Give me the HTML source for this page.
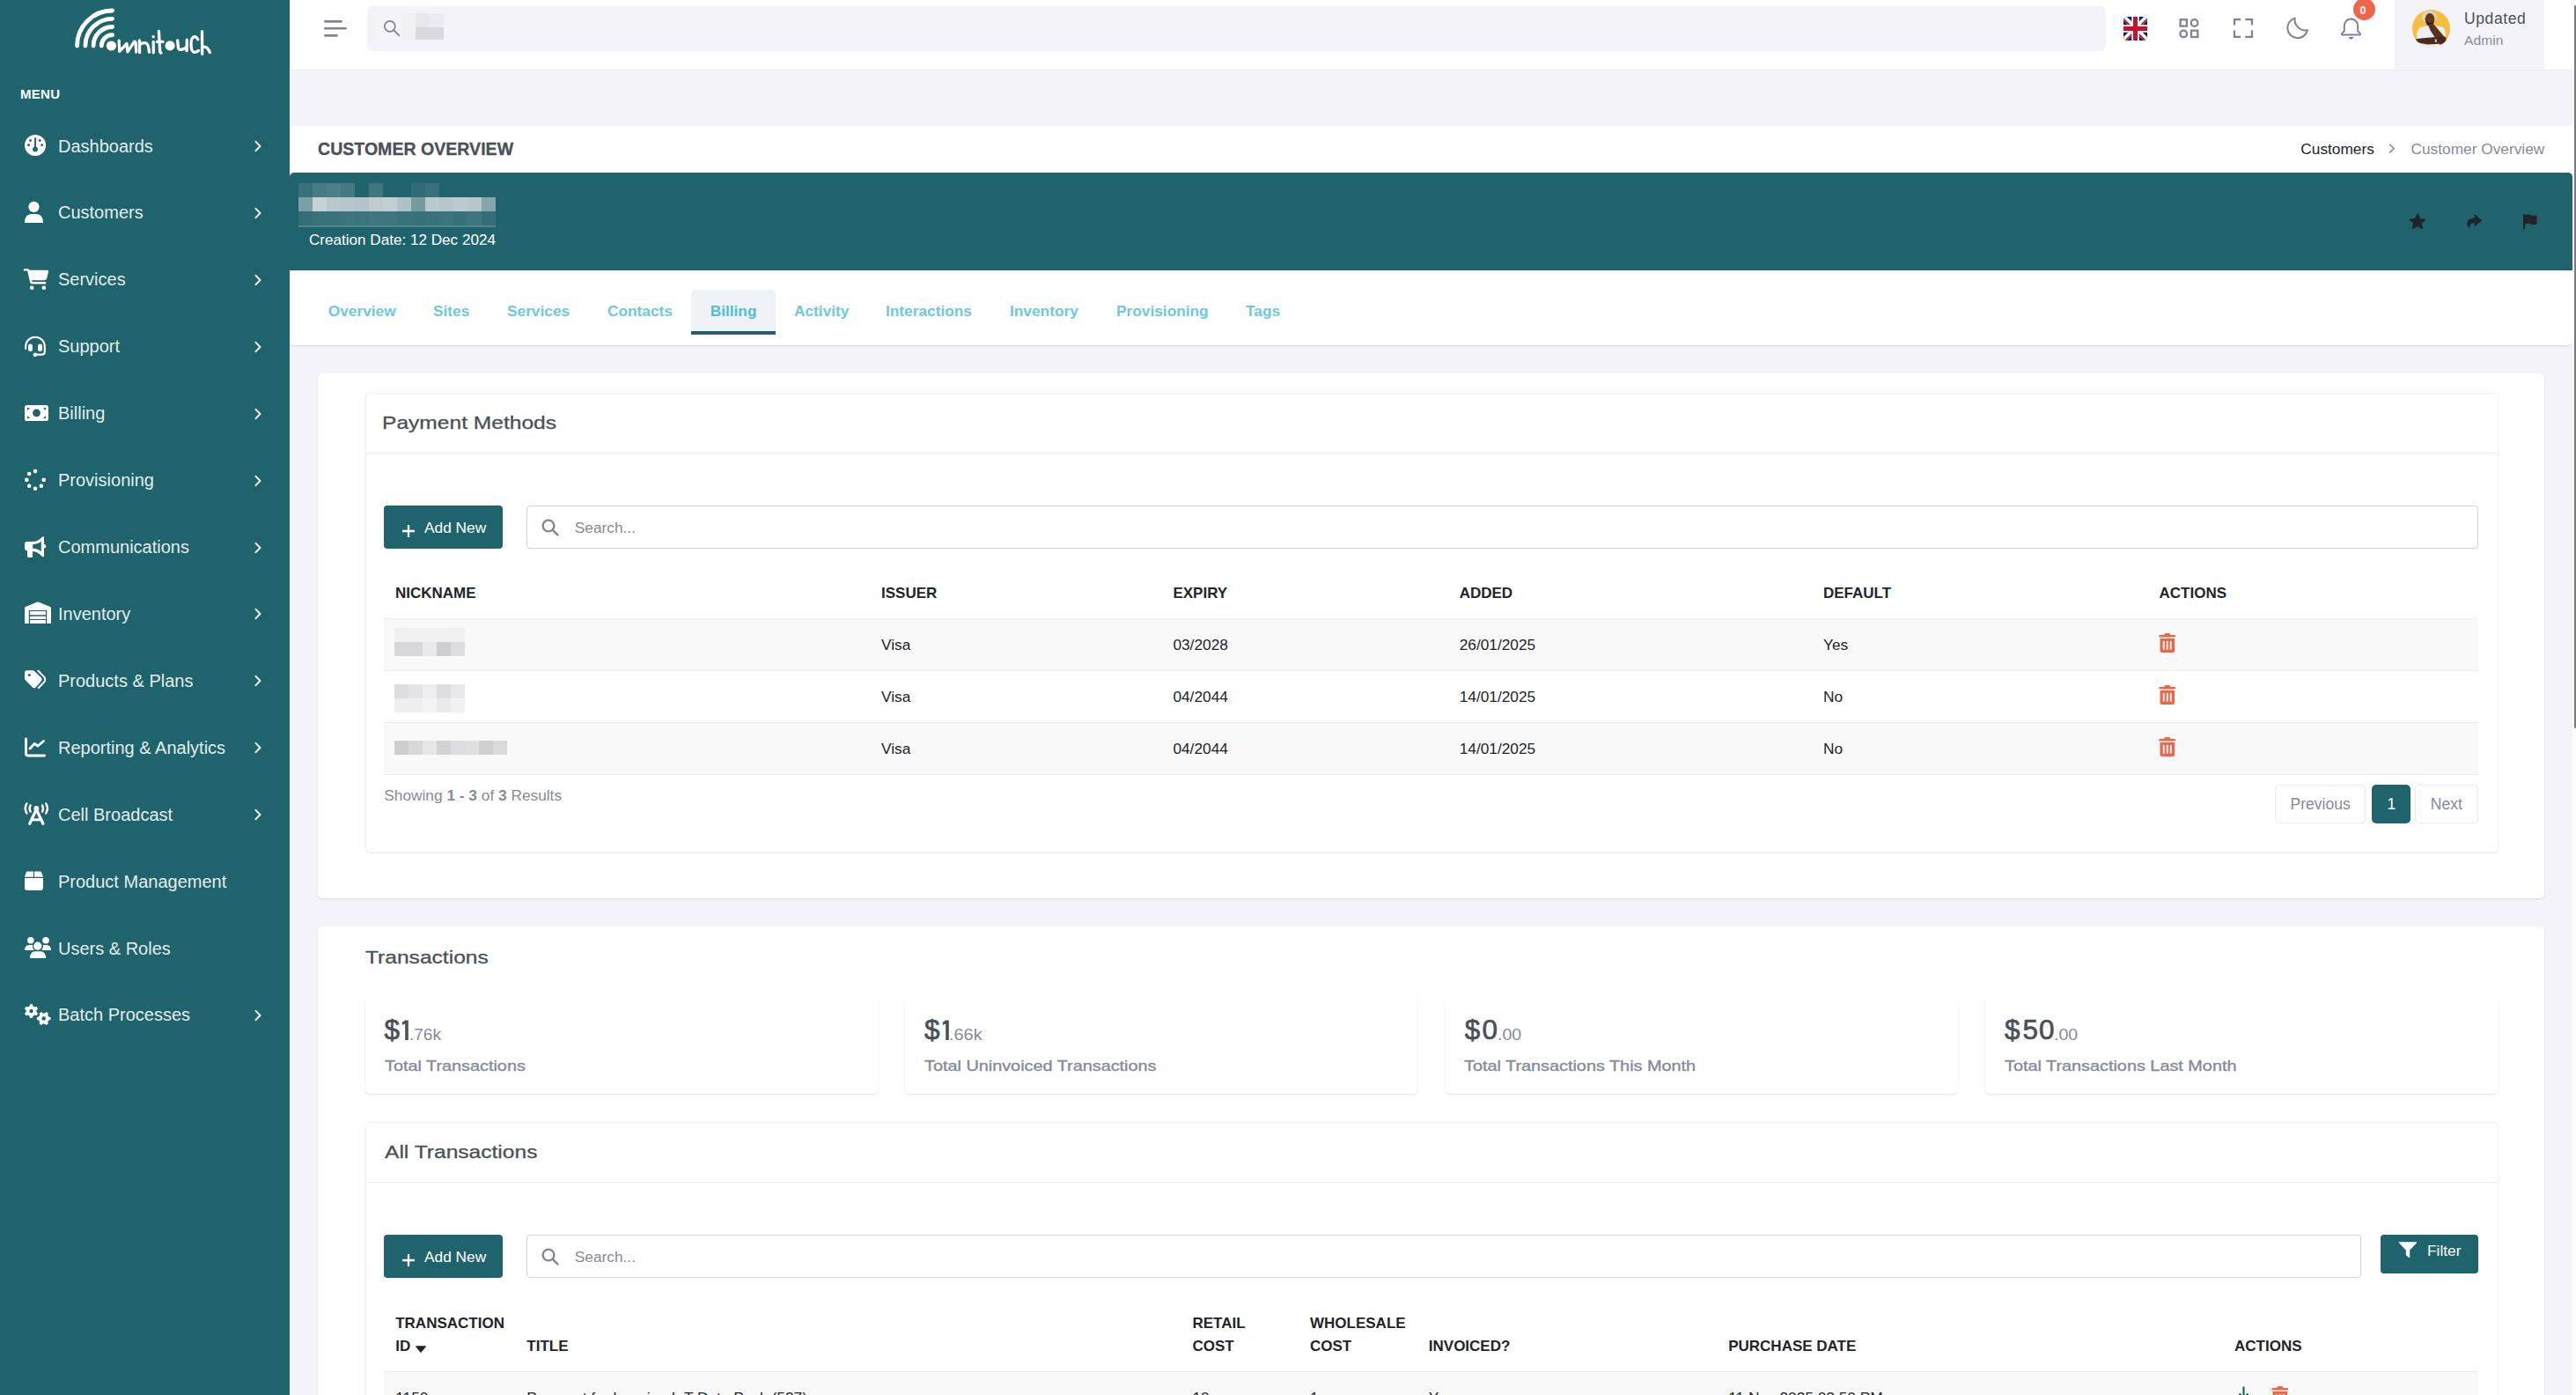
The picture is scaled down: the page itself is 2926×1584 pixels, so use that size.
<!DOCTYPE html>
<html>
<head>
<meta charset="utf-8">
<style>
*{box-sizing:border-box;margin:0;padding:0}
html,body{width:2926px;height:1584px;overflow:hidden}
body{position:relative;background:#f3f3f9;font-family:"Liberation Sans",sans-serif;color:#212529}
.abs{position:absolute}
.t{position:absolute;white-space:nowrap;line-height:1}
/* sidebar */
#sb{position:absolute;left:0;top:0;width:329px;height:1584px;background:#1f646c}
.mi{position:absolute;left:0;width:329px;height:40px}
.mi svg.ic{position:absolute;left:22px;top:0;width:40px;height:40px}
.mi .lb{position:absolute;left:66px;top:10.5px;font-size:20px;line-height:20px;color:rgba(255,255,255,0.9);white-space:nowrap}
.mi svg.ch{position:absolute;left:286px;top:14px;width:14px;height:14px}
/* header */
#hd{position:absolute;left:329px;top:0;width:2593px;height:80px;background:#fff;border-bottom:1px solid #e9ebec}
#scr{position:absolute;left:2922px;top:0;width:4px;height:1584px;background:#fbfbfb}
#scr i{position:absolute;left:2px;top:6px;width:2px;height:821px;background:#7a7a7a;border-radius:1px}

/* header contents */
.hic{position:absolute;top:0}
/* title */
#ttl{position:absolute;left:329px;top:143px;width:2593px;height:53px;background:#fff}
#ban{position:absolute;left:329px;top:196px;width:2593px;height:111px;background:#1f646c;border-radius:5px 5px 0 0}
#tabs{position:absolute;left:329px;top:307px;width:2593px;height:85px;background:#fff;border-radius:0 0 5px 5px;box-shadow:0 1px 2px rgba(56,65,74,0.15)}
.tab{position:absolute;top:38px;font-size:17.3px;line-height:17px;font-weight:700;color:#6ec9dc;white-space:nowrap}
.card{position:absolute;background:#fff;border-radius:5px;box-shadow:0 1px 2px rgba(56,65,74,0.15)}
.icard{position:absolute;background:#fff;border-radius:5px;border:1px solid #f2f2f4;box-shadow:0 1px 2px rgba(56,65,74,0.08)}
.h4{position:absolute;font-size:21px;line-height:21px;color:#495057;white-space:nowrap;transform-origin:0 0;transform:scaleX(1.17);-webkit-text-stroke:0.3px #495057}
.btn{position:absolute;background:#1f646c;border-radius:4px;color:#fff}
.inp{position:absolute;background:#fff;border:1px solid #ced4da;border-radius:4px}
.th{position:absolute;font-size:17px;line-height:17px;font-weight:700;color:#212529;white-space:nowrap}
.td{position:absolute;font-size:17.3px;line-height:17px;color:#212529;white-space:nowrap}
.row{position:absolute;border-bottom:1px solid #e9ebec}
</style>
</head>
<body>

<!-- SIDEBAR -->
<div id="sb">
  <svg class="abs" style="left:75px;top:0" width="180" height="70" viewBox="0 0 180 70" fill="none" stroke="#fff" stroke-linecap="round" stroke-linejoin="round">
    <path d="M12.6,52 A40,40 0 0 1 52.6,12" stroke-width="4.8"/>
    <path d="M21.9,52 A30.7,30.7 0 0 1 52.6,21.3" stroke-width="4.8"/>
    <path d="M31.1,52 A21.5,21.5 0 0 1 52.6,30.5" stroke-width="4.8"/>
    <path d="M40.3,52 A12.3,12.3 0 0 1 52.6,39.7" stroke-width="4.8"/>
    <g stroke-width="3.3">
      <path d="M60.2,46.2 L60.7,58.3 L69,49.5 L70,58.8 L77.2,47.6 Q78.5,46.5 79,48.5 L79.8,59"/>
      <path d="M83.4,46 L83.6,59.5 M83.5,51 Q87,47.5 91.1,49 Q93.5,50 94.5,59.2"/>
      <path d="M99.2,47.4 L99.3,59.8"/>
      <path d="M105.4,35.3 L106.7,58.6 Q107,60 108,60.1 M103.4,47.4 L110.1,47.4"/>
      <path d="M126.7,46 L127.5,54.5 Q128.5,56.8 131,56.4 Q135,55.5 136.3,53.9 M137.3,45.2 L137.1,57.7"/>
      <path d="M149.8,44.7 Q148,41.5 145.8,41.7 Q142,42.5 142,50.4 Q142.2,59.3 145.8,59.3 Q149,59.3 150.7,57.4"/>
      <path d="M154.5,35.7 L154.7,61.25 M154.6,54 Q156.5,52.5 159.3,53.8 Q161.5,55 163.4,59.6"/>
    </g>
    <circle cx="99.2" cy="41.8" r="1.7" fill="#fff" stroke="none"/>
    <circle cx="51.4" cy="52" r="5.6" fill="#fff" stroke="none"/>
    <circle cx="118.1" cy="51.9" r="5.6" fill="#fff" stroke="none"/>
  </svg>
  <div class="t" style="left:23px;top:98.5px;font-size:15px;font-weight:700;color:#fff;letter-spacing:0.3px">MENU</div>
  <!-- menu items inserted below -->
  <div class="mi" style="top:145.00px"><svg class="ic" viewBox="0 0 40 40"><circle cx="18.06" cy="20.07" r="12.04" fill="#fff"/><rect x="17.1" y="11" width="1.9" height="13" rx="0.9" fill="#1f646c"/><circle cx="18" cy="24.4" r="2.9" fill="#1f646c"/><circle cx="12.6" cy="14.6" r="1.45" fill="#1f646c"/><circle cx="23.3" cy="14.6" r="1.45" fill="#1f646c"/><circle cx="10.5" cy="19.8" r="1.45" fill="#1f646c"/><circle cx="25.6" cy="19.8" r="1.45" fill="#1f646c"/></svg><div class="lb">Dashboards</div><svg class="ch" viewBox="0 0 14 14"><path d="M4.5,1.8 L9.5,7 L4.5,12.2" fill="none" stroke="#fff" stroke-width="1.9" stroke-linecap="round" stroke-linejoin="round"/></svg></div>
  <div class="mi" style="top:220.92px"><svg class="ic" viewBox="0 0 40 40"><circle cx="16.5" cy="13.9" r="6.1" fill="#fff"/><path d="M6,32 Q6,22 14,22 L19,22 Q27,22 27,32 Z" fill="#fff"/></svg><div class="lb">Customers</div><svg class="ch" viewBox="0 0 14 14"><path d="M4.5,1.8 L9.5,7 L4.5,12.2" fill="none" stroke="#fff" stroke-width="1.9" stroke-linecap="round" stroke-linejoin="round"/></svg></div>
  <div class="mi" style="top:296.84px"><svg class="ic" viewBox="0 0 40 40"><path d="M5.9,8.2 H9.6 Q10.9,8.2 11.3,9.5 L11.4,9.8 H32.2 Q33.4,9.9 33.1,11.3 L31.2,19 Q30.8,21 28.8,21.2 H14.2 L14.7,23 H30.2 V25.6 H14.4 Q12.6,25.5 12.2,23.8 L9.1,10.6 H5.9 A1.2,1.2 0 0 1 5.9,8.2 Z" fill="#fff"/><circle cx="14.2" cy="29.7" r="2.3" fill="#fff"/><circle cx="27.8" cy="29.7" r="2.3" fill="#fff"/></svg><div class="lb">Services</div><svg class="ch" viewBox="0 0 14 14"><path d="M4.5,1.8 L9.5,7 L4.5,12.2" fill="none" stroke="#fff" stroke-width="1.9" stroke-linecap="round" stroke-linejoin="round"/></svg></div>
  <div class="mi" style="top:372.76px"><svg class="ic" viewBox="0 0 40 40"><path d="M7.2,23 V20.5 A10.8,10.8 0 0 1 28.8,20.5 V26.5 Q28.8,29.6 25.8,29.6 H18" fill="none" stroke="#fff" stroke-width="2.1" stroke-linecap="round"/><rect x="10" y="17.6" width="5" height="8.5" rx="2.4" fill="#fff"/><rect x="21" y="17.6" width="5" height="8.5" rx="2.4" fill="#fff"/><ellipse cx="18" cy="29.7" rx="2.5" ry="2.2" fill="#fff"/></svg><div class="lb">Support</div><svg class="ch" viewBox="0 0 14 14"><path d="M4.5,1.8 L9.5,7 L4.5,12.2" fill="none" stroke="#fff" stroke-width="1.9" stroke-linecap="round" stroke-linejoin="round"/></svg></div>
  <div class="mi" style="top:448.68px"><svg class="ic" viewBox="0 0 40 40"><rect x="6" y="10.9" width="27" height="18.1" rx="2.6" fill="#fff"/><circle cx="19.5" cy="19.8" r="4.4" fill="#1f646c"/><path d="M9,14 H12 L9,17 Z M30,14 H27 L30,17 Z M9,23 L12,26 H9 Z M30,23 L27,26 H30 Z" fill="#1f646c"/></svg><div class="lb">Billing</div><svg class="ch" viewBox="0 0 14 14"><path d="M4.5,1.8 L9.5,7 L4.5,12.2" fill="none" stroke="#fff" stroke-width="1.9" stroke-linecap="round" stroke-linejoin="round"/></svg></div>
  <div class="mi" style="top:524.60px"><svg class="ic" viewBox="0 0 40 40"><g fill="#fff"><circle cx="18" cy="10.1" r="2.3"/><circle cx="11.2" cy="13" r="2.3"/><circle cx="8.3" cy="19.9" r="2.3"/><circle cx="11.2" cy="26.8" r="2.3"/><circle cx="18" cy="29.8" r="2.3"/><circle cx="24.8" cy="26.8" r="2.3"/><circle cx="27.7" cy="19.9" r="2.3"/></g></svg><div class="lb">Provisioning</div><svg class="ch" viewBox="0 0 14 14"><path d="M4.5,1.8 L9.5,7 L4.5,12.2" fill="none" stroke="#fff" stroke-width="1.9" stroke-linecap="round" stroke-linejoin="round"/></svg></div>
  <div class="mi" style="top:600.52px"><svg class="ic" viewBox="0 0 40 40"><path d="M8.8,14 H15 Q21,14 26,8.8 Q27,8 28,8.5 V31 Q27,31.8 26,31 Q21,25.5 15,25 V30.5 Q15,32 13.5,32 H10.5 Q9,32 9,30.5 V24.5 Q6,24 6,21 V17 Q6,14 8.8,14 Z" fill="#fff"/><path d="M15.2,17.2 Q21,17 24.8,13.8 V25.2 Q21,22 15.2,21.8 Z" fill="#1f646c"/><ellipse cx="28.6" cy="19.3" rx="1.5" ry="2.2" fill="#fff"/></svg><div class="lb">Communications</div><svg class="ch" viewBox="0 0 14 14"><path d="M4.5,1.8 L9.5,7 L4.5,12.2" fill="none" stroke="#fff" stroke-width="1.9" stroke-linecap="round" stroke-linejoin="round"/></svg></div>
  <div class="mi" style="top:676.44px"><svg class="ic" viewBox="0 0 40 40"><path d="M6,14.2 Q6,13.6 7,13.1 L20.5,7.6 Q21,7.4 21.5,7.6 L35,13.1 Q36,13.6 36,14.2 V32 H6 Z" fill="#fff"/><rect x="10.8" y="17" width="20.4" height="15.5" fill="#1f646c"/><rect x="12" y="18" width="18" height="4.2" rx="0.6" fill="#fff"/><rect x="12" y="23.8" width="18" height="3.2" rx="0.6" fill="#fff"/><rect x="12" y="28.1" width="18" height="3.9" rx="0.6" fill="#fff"/></svg><div class="lb">Inventory</div><svg class="ch" viewBox="0 0 14 14"><path d="M4.5,1.8 L9.5,7 L4.5,12.2" fill="none" stroke="#fff" stroke-width="1.9" stroke-linecap="round" stroke-linejoin="round"/></svg></div>
  <div class="mi" style="top:752.36px"><svg class="ic" viewBox="0 0 40 40"><path d="M6,11.5 Q6,9.2 8.2,9.2 H15.3 Q16.2,9.2 17,10 L24.8,17.6 Q26.4,19.6 24.8,21.4 L18.6,28.4 Q16.8,30.2 15,28.6 L7,20.4 Q6,19.4 6,18.2 Z" fill="#fff"/><circle cx="11.3" cy="14.4" r="1.5" fill="#1f646c"/><path d="M21.3,9.8 L28.2,16.6 Q30.2,19.4 28.2,22.4 L21.8,29" fill="none" stroke="#fff" stroke-width="2" stroke-linecap="round"/></svg><div class="lb">Products &amp; Plans</div><svg class="ch" viewBox="0 0 14 14"><path d="M4.5,1.8 L9.5,7 L4.5,12.2" fill="none" stroke="#fff" stroke-width="1.9" stroke-linecap="round" stroke-linejoin="round"/></svg></div>
  <div class="mi" style="top:828.28px"><svg class="ic" viewBox="0 0 40 40"><path d="M7.5,11 V27.6 Q7.5,30 9.9,30 H28.5" fill="none" stroke="#fff" stroke-width="2.9" stroke-linecap="round"/><path d="M12,22 L17.3,16.3 L21,19 L27.5,13.5" fill="none" stroke="#fff" stroke-width="2.9" stroke-linecap="round" stroke-linejoin="round"/></svg><div class="lb">Reporting &amp; Analytics</div><svg class="ch" viewBox="0 0 14 14"><path d="M4.5,1.8 L9.5,7 L4.5,12.2" fill="none" stroke="#fff" stroke-width="1.9" stroke-linecap="round" stroke-linejoin="round"/></svg></div>
  <div class="mi" style="top:904.20px"><svg class="ic" viewBox="0 0 40 40"><circle cx="19.3" cy="13.9" r="2.9" fill="#fff"/><path d="M19.3,15 L11.7,31.3 M19.3,15 L26.9,31.3" stroke="#fff" stroke-width="3.2" stroke-linecap="round"/><path d="M14,26.8 H24.6" stroke="#fff" stroke-width="3"/><path d="M8.4,8.4 Q5,14 8.4,19.4 M12.6,10.4 Q10.6,14 12.6,17.6 M30.2,8.4 Q33.6,14 30.2,19.4 M26,10.4 Q28,14 26,17.6" fill="none" stroke="#fff" stroke-width="2.4" stroke-linecap="round"/></svg><div class="lb">Cell Broadcast</div><svg class="ch" viewBox="0 0 14 14"><path d="M4.5,1.8 L9.5,7 L4.5,12.2" fill="none" stroke="#fff" stroke-width="1.9" stroke-linecap="round" stroke-linejoin="round"/></svg></div>
  <div class="mi" style="top:980.12px"><svg class="ic" viewBox="0 0 40 40"><path d="M9,9.6 H15.9 V15.8 H6 L7.6,10.8 Q8,9.6 9,9.6 Z M17,9.6 H23.8 Q24.8,9.6 25.2,10.8 L27,15.8 H17 Z M6,16.9 H27 V28 Q27,31 24,31 H9 Q6,31 6,28 Z" fill="#fff"/></svg><div class="lb">Product Management</div></div>
  <div class="mi" style="top:1056.04px"><svg class="ic" viewBox="0 0 40 40"><circle cx="12.8" cy="11.8" r="3.8" fill="#fff"/><circle cx="30" cy="11.8" r="3.8" fill="#fff"/><path d="M6,23 Q6,17 11.5,17 H15 Q14.6,20.5 16.6,23 Z M36,23 Q36,17 30.5,17 H27 Q27.4,20.5 25.4,23 Z" fill="#fff"/><circle cx="20.8" cy="18.2" r="4.6" fill="#fff"/><path d="M12,32 Q12,24.2 18,24.2 H24 Q30,24.2 30,32 Z" fill="#fff"/></svg><div class="lb">Users &amp; Roles</div></div>
  <div class="mi" style="top:1131.96px"><svg class="ic" viewBox="0 0 40 40"><path d="M11.57,10.42 L12.04,8.23 L14.96,8.23 L15.43,10.42 L17.46,11.59 L19.58,10.90 L21.04,13.43 L19.38,14.93 L19.38,17.27 L21.04,18.77 L19.58,21.30 L17.46,20.61 L15.43,21.78 L14.96,23.97 L12.04,23.97 L11.57,21.78 L9.54,20.61 L7.42,21.30 L5.96,18.77 L7.62,17.27 L7.62,14.93 L5.96,13.43 L7.42,10.90 L9.54,11.59 Z" fill="#fff"/><circle cx="13.5" cy="16.1" r="2.2" fill="#1f646c"/><path d="M33.38,22.57 L35.57,23.04 L35.57,25.96 L33.38,26.43 L32.21,28.46 L32.90,30.58 L30.37,32.04 L28.87,30.38 L26.53,30.38 L25.03,32.04 L22.50,30.58 L23.19,28.46 L22.02,26.43 L19.83,25.96 L19.83,23.04 L22.02,22.57 L23.19,20.54 L22.50,18.42 L25.03,16.96 L26.53,18.62 L28.87,18.62 L30.37,16.96 L32.90,18.42 L32.21,20.54 Z" fill="#fff"/><circle cx="27.7" cy="24.5" r="2.2" fill="#1f646c"/></svg><div class="lb">Batch Processes</div><svg class="ch" viewBox="0 0 14 14"><path d="M4.5,1.8 L9.5,7 L4.5,12.2" fill="none" stroke="#fff" stroke-width="1.9" stroke-linecap="round" stroke-linejoin="round"/></svg></div>
</div>

<!-- HEADER -->
<div id="hd"></div>

<!-- HEADER CONTENTS -->
<svg class="abs" style="left:366px;top:21px" width="30" height="23" viewBox="0 0 30 23"><g stroke="#7f8394" stroke-width="2.6" stroke-linecap="round"><path d="M3.4,3.4 H21.5"/><path d="M3.4,11.3 H26.6"/><path d="M3.4,19.4 H16.4"/></g></svg>
<div class="abs" style="left:417px;top:7px;width:1975px;height:51px;background:#f3f3f9;border-radius:6px"></div>
<svg class="abs" style="left:434px;top:21px" width="22" height="22" viewBox="0 0 22 22"><circle cx="8.8" cy="8.8" r="6" fill="none" stroke="#7f8394" stroke-width="1.7"/><path d="M13.2,13.2 L19.3,19.3" stroke="#7f8394" stroke-width="1.9" stroke-linecap="round"/></svg>
<div class="abs" style="left:456px;top:15px;width:16px;height:30px;background:#efeff4"></div><div class="abs" style="left:472px;top:15px;width:16px;height:16px;background:#e7e7ed"></div><div class="abs" style="left:488px;top:15px;width:16px;height:16px;background:#eaeaf0"></div>
<div class="abs" style="left:472px;top:31px;width:32px;height:14px;background:#d9d9df"></div>
<!-- UK flag -->
<svg class="abs" style="left:2412px;top:19px" width="27" height="27" viewBox="0 0 27 27"><defs><clipPath id="fc"><rect x="0" y="0" width="27" height="27" rx="4.5"/></clipPath></defs><g clip-path="url(#fc)"><rect width="27" height="27" fill="#012169"/><path d="M0,0 L27,27 M27,0 L0,27" stroke="#fff" stroke-width="5.5"/><path d="M0,0 L13.5,13.5 M27,27 L13.5,13.5" stroke="#C8102E" stroke-width="1.8" transform="translate(-1.2,1.2)"/><path d="M27,0 L13.5,13.5 M0,27 L13.5,13.5" stroke="#C8102E" stroke-width="1.8" transform="translate(1.2,1.2)"/><path d="M13.5,0 V27 M0,13.5 H27" stroke="#fff" stroke-width="8.5"/><path d="M13.5,0 V27 M0,13.5 H27" stroke="#C8102E" stroke-width="5"/></g></svg>
<!-- grid -->
<svg class="abs" style="left:2474px;top:20px" width="25" height="25" viewBox="0 0 25 25"><g fill="none" stroke="#7f8394" stroke-width="2.3"><rect x="2.6" y="2.3" width="7.3" height="7.3"/><circle cx="18.6" cy="6" r="3.8"/><circle cx="6.2" cy="18.4" r="3.8"/><rect x="15" y="14.7" width="7.3" height="7.3"/></g></svg>
<!-- fullscreen -->
<svg class="abs" style="left:2536px;top:20px" width="25" height="25" viewBox="0 0 25 25"><g fill="none" stroke="#7f8394" stroke-width="2.3"><path d="M2,8.6 V2.2 H9"/><path d="M14.3,2.2 H22 V8.6"/><path d="M22,14.5 V21.8 H14.3"/><path d="M9,21.8 H2 V14.5"/></g></svg>
<!-- moon -->
<svg class="abs" style="left:2590px;top:14px" width="36" height="34" viewBox="0 0 36 34"><path d="M16.7,6.6 A11.5,11.5 0 1 0 31,20.2 A12,12 0 0 1 16.7,6.6 Z" fill="none" stroke="#7f8394" stroke-width="2" stroke-linejoin="round"/></svg>
<!-- bell -->
<svg class="abs" style="left:2657px;top:18px" width="28" height="29" viewBox="0 0 28 29"><path d="M13.5,3.5 Q6,4 5.8,12 V17.2 L3.4,19.6 Q2.8,20.4 3.2,21.2 Q3.6,21.6 4.4,21.6 H22.6 Q23.4,21.6 23.8,21.2 Q24.2,20.4 23.6,19.6 L21.2,17.2 V12 Q21,4 13.5,3.5 Z" fill="none" stroke="#7f8394" stroke-width="2" stroke-linejoin="round"/><path d="M12,3.6 L13.5,2.2 L15,3.6 Z" fill="#7f8394"/><path d="M10.5,24 H16.5 Q15.5,26.7 13.5,26.7 Q11.5,26.7 10.5,24 Z" fill="#7f8394"/></svg>
<div class="abs" style="left:2672.5px;top:-2.5px;width:25px;height:25px;border-radius:50%;background:#f06548"></div>
<div class="t" style="left:2680.5px;top:5.5px;font-size:12.5px;font-weight:700;color:#fff">0</div>
<!-- profile -->
<div class="abs" style="left:2720px;top:0;width:170px;height:79px;background:#f3f3f9"></div>
<svg class="abs" style="left:2740px;top:11px" width="43" height="43" viewBox="0 0 43 43"><defs><clipPath id="av"><circle cx="21.5" cy="21.5" r="21.5"/></clipPath></defs><g clip-path="url(#av)"><rect width="43" height="43" fill="#f7bd3c"/><path d="M5,43 L5,32 Q5.2,23 8,21 Q11,19.3 17.4,18.1 L25.6,17.7 Q33,19 35.3,20.4 Q38,23 38,30 L38,43 Z" fill="#ededf2"/><ellipse cx="19.4" cy="8.4" rx="8.4" ry="7.5" fill="#e4d3b5"/><ellipse cx="20" cy="10.7" rx="5.4" ry="6.8" fill="#65391f"/><path d="M15.2,12.5 Q16,18.5 20,18.6 Q24,18.4 25,12.5 Q22.5,15 20,15 Q17.5,15 15.2,12.5 Z" fill="#2e1a0f"/><path d="M18.3,17.6 Q21,15.6 24.6,16.8 L38.5,33 L37.5,40 L31,39.5 L20.5,23.5 Z" fill="#5a3320"/><path d="M3.5,33.6 Q15,31.2 38,30.8 L38.5,37 Q28,39.5 17,39.6 Q9,38.8 3.5,35.8 Z" fill="#4b2a1a"/><rect x="25.8" y="33.6" width="2" height="3.4" fill="#c9c9cc"/></g></svg>
<div class="t" style="left:2799px;top:13px;font-size:17.5px;color:#495057;letter-spacing:0.6px">Updated</div>
<div class="t" style="left:2799px;top:38px;font-size:15.5px;color:#878a99;letter-spacing:0.1px">Admin</div>

<!-- TITLE BAR -->
<div id="ttl"></div>
<div class="t" style="left:360.6px;top:159.3px;font-size:20.25px;font-weight:700;color:#495057;transform-origin:0 0;transform:scaleX(0.966);-webkit-text-stroke:0.3px #495057">CUSTOMER OVERVIEW</div>
<div class="t" style="left:2613.3px;top:160.8px;font-size:17.3px;color:#212529">Customers</div>
<svg class="abs" style="left:2711px;top:162px" width="12" height="13" viewBox="0 0 12 13"><path d="M3.6,2.3 L8.2,6.6 L3.6,10.9" fill="none" stroke="#878a99" stroke-width="1.5" stroke-linecap="round"/></svg>
<div class="t" style="left:2738.5px;top:160.8px;font-size:17.3px;color:#878a99">Customer Overview</div>

<!-- BANNER -->
<div id="ban"></div>
<div class="abs" style="left:339px;top:208px;width:16px;height:16px;background:rgb(56,113,122)"></div>
<div class="abs" style="left:355px;top:208px;width:16px;height:16px;background:rgb(72,124,132)"></div>
<div class="abs" style="left:371px;top:208px;width:16px;height:16px;background:rgb(76,127,135)"></div>
<div class="abs" style="left:387px;top:208px;width:16px;height:16px;background:rgb(68,121,130)"></div>
<div class="abs" style="left:419px;top:208px;width:16px;height:16px;background:rgb(64,119,127)"></div>
<div class="abs" style="left:467px;top:208px;width:16px;height:16px;background:rgb(48,108,117)"></div>
<div class="abs" style="left:483px;top:208px;width:16px;height:16px;background:rgb(56,113,122)"></div>
<div class="abs" style="left:339px;top:224px;width:16px;height:16px;background:rgb(123,159,164)"></div>
<div class="abs" style="left:355px;top:224px;width:16px;height:16px;background:rgb(198,210,211)"></div>
<div class="abs" style="left:371px;top:224px;width:16px;height:16px;background:rgb(184,200,203)"></div>
<div class="abs" style="left:387px;top:224px;width:16px;height:16px;background:rgb(182,199,201)"></div>
<div class="abs" style="left:403px;top:224px;width:16px;height:16px;background:rgb(178,196,199)"></div>
<div class="abs" style="left:419px;top:224px;width:16px;height:16px;background:rgb(190,204,206)"></div>
<div class="abs" style="left:435px;top:224px;width:16px;height:16px;background:rgb(194,207,209)"></div>
<div class="abs" style="left:451px;top:224px;width:16px;height:16px;background:rgb(174,193,196)"></div>
<div class="abs" style="left:467px;top:224px;width:16px;height:16px;background:rgb(117,154,160)"></div>
<div class="abs" style="left:483px;top:224px;width:16px;height:16px;background:rgb(186,201,204)"></div>
<div class="abs" style="left:499px;top:224px;width:16px;height:16px;background:rgb(182,199,201)"></div>
<div class="abs" style="left:515px;top:224px;width:16px;height:16px;background:rgb(188,203,205)"></div>
<div class="abs" style="left:531px;top:224px;width:16px;height:16px;background:rgb(182,199,201)"></div>
<div class="abs" style="left:547px;top:224px;width:16px;height:16px;background:rgb(133,166,171)"></div>
<div class="abs" style="left:339px;top:240px;width:16px;height:16px;background:rgb(52,110,119)"></div>
<div class="abs" style="left:355px;top:240px;width:16px;height:16px;background:rgb(58,114,123)"></div>
<div class="abs" style="left:371px;top:240px;width:16px;height:16px;background:rgb(58,114,123)"></div>
<div class="abs" style="left:387px;top:240px;width:16px;height:16px;background:rgb(62,117,126)"></div>
<div class="abs" style="left:403px;top:240px;width:16px;height:16px;background:rgb(60,116,124)"></div>
<div class="abs" style="left:419px;top:240px;width:16px;height:16px;background:rgb(64,119,127)"></div>
<div class="abs" style="left:435px;top:240px;width:16px;height:16px;background:rgb(62,117,126)"></div>
<div class="abs" style="left:451px;top:240px;width:16px;height:16px;background:rgb(58,114,123)"></div>
<div class="abs" style="left:467px;top:240px;width:16px;height:16px;background:rgb(56,113,122)"></div>
<div class="abs" style="left:483px;top:240px;width:16px;height:16px;background:rgb(58,114,123)"></div>
<div class="abs" style="left:499px;top:240px;width:16px;height:16px;background:rgb(60,116,124)"></div>
<div class="abs" style="left:515px;top:240px;width:16px;height:16px;background:rgb(56,113,122)"></div>
<div class="abs" style="left:531px;top:240px;width:16px;height:16px;background:rgb(62,117,126)"></div>
<div class="abs" style="left:547px;top:240px;width:16px;height:16px;background:rgb(52,110,119)"></div>
<div class="abs" style="left:339px;top:256px;width:224px;height:2px;background:rgba(255,255,255,0.22)"></div>
<div class="t" style="left:351px;top:263.8px;font-size:17.1px;color:#fff">Creation Date: 12 Dec 2024</div>
<svg class="abs" style="left:2734px;top:240px" width="24" height="23" viewBox="0 0 24 23"><path d="M12,3 L14.6,8.6 L20.6,9.3 L16.2,13.4 L17.4,19.4 L12,16.4 L6.6,19.4 L7.8,13.4 L3.4,9.3 L9.4,8.6 Z" fill="#212529" stroke="#212529" stroke-width="1.3" stroke-linejoin="round"/></svg>
<svg class="abs" style="left:2798px;top:240px" width="24" height="23" viewBox="0 0 24 23"><path d="M13.2,3.6 L20.8,10.3 L13.2,16.6 V12.8 Q7,12.4 6.6,18.5 Q4.6,16.8 4.8,14 Q5.2,7.6 13.2,7.8 Z" fill="#212529" stroke="#212529" stroke-width="0.8" stroke-linejoin="round"/></svg>
<svg class="abs" style="left:2862px;top:240px" width="24" height="23" viewBox="0 0 24 23"><rect x="4" y="3.2" width="2.2" height="17" fill="#212529"/><path d="M6,4.2 Q9.5,3 12.5,4.2 Q15.5,5.4 19.6,4.4 V14.4 Q15.5,15.6 12.5,14.4 Q9.5,13.2 6,14.4 Z" fill="#212529"/></svg>

<!-- TABS -->
<div id="tabs">
  <div class="abs" style="left:456px;top:22px;width:96px;height:51px;background:#eff2f7;border-radius:5px 5px 0 0"></div>
  <div class="abs" style="left:456px;top:69px;width:96px;height:2px;background:#1f5e66"></div><div class="abs" style="left:456px;top:71px;width:96px;height:2px;background:#3d5187"></div>
  <div class="tab" style="left:43.8px">Overview</div>
  <div class="tab" style="left:163px">Sites</div>
  <div class="tab" style="left:247px">Services</div>
  <div class="tab" style="left:361px">Contacts</div>
  <div class="tab" style="left:477.7px;color:#4fbfd3">Billing</div>
  <div class="tab" style="left:573px">Activity</div>
  <div class="tab" style="left:677px">Interactions</div>
  <div class="tab" style="left:818px">Inventory</div>
  <div class="tab" style="left:939px">Provisioning</div>
  <div class="tab" style="left:1086px">Tags</div>
</div>


<!-- PAYMENT METHODS -->
<div class="card" style="left:361px;top:424px;width:2529px;height:596px"></div>
<div class="icard" style="left:414.5px;top:446px;width:2423px;height:521.5px"></div>
<div class="abs" style="left:415px;top:513.5px;width:2422px;height:1px;background:#e9ebec"></div>
<div class="h4" style="left:434.3px;top:469.1px">Payment Methods</div>
<div class="btn" style="left:436px;top:574px;width:135px;height:49px"></div>
<svg class="abs" style="left:456px;top:595px" width="16" height="16" viewBox="0 0 16 16"><path d="M8,1 V15 M1,8 H15" stroke="#fff" stroke-width="2.3"/></svg>
<div class="t" style="left:482px;top:591px;font-size:17.3px;color:#fff">Add New</div>
<div class="inp" style="left:598px;top:574px;width:2216.5px;height:49px"></div>
<svg class="abs" style="left:614px;top:588px" width="22" height="22" viewBox="0 0 22 22"><circle cx="9" cy="9" r="6.4" fill="none" stroke="#80869a" stroke-width="2.4"/><path d="M13.8,13.8 L19.4,19.4" stroke="#80869a" stroke-width="2.6" stroke-linecap="round"/></svg>
<div class="t" style="left:652.8px;top:591.3px;font-size:17.3px;color:#878a99">Search...</div>
<div class="th" style="left:449px;top:665px">NICKNAME</div>
<div class="th" style="left:1001px;top:665px">ISSUER</div>
<div class="th" style="left:1332.4px;top:665px">EXPIRY</div>
<div class="th" style="left:1657.7px;top:665px">ADDED</div>
<div class="th" style="left:2071px;top:665px">DEFAULT</div>
<div class="th" style="left:2452.5px;top:665px">ACTIONS</div>
<div class="abs" style="left:436px;top:702px;width:2378.5px;height:1px;background:#e9ebec"></div>
<div class="abs" style="left:436px;top:703px;width:2378.5px;height:58px;background:#f9f9f9"></div>
<div class="abs" style="left:436px;top:761px;width:2378.5px;height:1px;background:#e9ebec"></div>
<div class="abs" style="left:436px;top:820px;width:2378.5px;height:1px;background:#e9ebec"></div>
<div class="abs" style="left:436px;top:821px;width:2378.5px;height:58px;background:#f9f9f9"></div>
<div class="abs" style="left:436px;top:879px;width:2378.5px;height:1px;background:#e9ebec"></div>
<div class="abs" style="left:448px;top:712.8px;width:16px;height:16px;background:rgb(240,240,242)"></div>
<div class="abs" style="left:464px;top:712.8px;width:16px;height:16px;background:rgb(241,241,243)"></div>
<div class="abs" style="left:480px;top:712.8px;width:16px;height:16px;background:rgb(241,241,243)"></div>
<div class="abs" style="left:496px;top:712.8px;width:16px;height:16px;background:rgb(241,241,243)"></div>
<div class="abs" style="left:512px;top:712.8px;width:16px;height:16px;background:rgb(240,240,242)"></div>
<div class="abs" style="left:448px;top:728.8px;width:16px;height:16px;background:rgb(215,215,217)"></div>
<div class="abs" style="left:464px;top:728.8px;width:16px;height:16px;background:rgb(215,215,217)"></div>
<div class="abs" style="left:480px;top:728.8px;width:16px;height:16px;background:rgb(233,233,235)"></div>
<div class="abs" style="left:496px;top:728.8px;width:16px;height:16px;background:rgb(205,205,207)"></div>
<div class="abs" style="left:512px;top:728.8px;width:16px;height:16px;background:rgb(222,222,224)"></div>
<div class="abs" style="left:448px;top:777px;width:16px;height:16px;background:rgb(221,221,223)"></div>
<div class="abs" style="left:464px;top:777px;width:16px;height:16px;background:rgb(228,228,230)"></div>
<div class="abs" style="left:480px;top:777px;width:16px;height:16px;background:rgb(239,239,241)"></div>
<div class="abs" style="left:496px;top:777px;width:16px;height:16px;background:rgb(222,222,224)"></div>
<div class="abs" style="left:512px;top:777px;width:16px;height:16px;background:rgb(233,233,235)"></div>
<div class="abs" style="left:448px;top:793px;width:16px;height:16px;background:rgb(238,238,240)"></div>
<div class="abs" style="left:464px;top:793px;width:16px;height:16px;background:rgb(238,238,240)"></div>
<div class="abs" style="left:480px;top:793px;width:16px;height:16px;background:rgb(243,243,245)"></div>
<div class="abs" style="left:496px;top:793px;width:16px;height:16px;background:rgb(234,234,236)"></div>
<div class="abs" style="left:512px;top:793px;width:16px;height:16px;background:rgb(241,241,243)"></div>

<div class="abs" style="left:448px;top:841px;width:16px;height:16px;background:#cfcfd1"></div>
<div class="abs" style="left:464px;top:841px;width:16px;height:16px;background:#d9d9db"></div>
<div class="abs" style="left:480px;top:841px;width:16px;height:16px;background:#e6e6e8"></div>
<div class="abs" style="left:496px;top:841px;width:16px;height:16px;background:#d2d2d4"></div>
<div class="abs" style="left:512px;top:841px;width:16px;height:16px;background:#dcdce0"></div>
<div class="abs" style="left:528px;top:841px;width:16px;height:16px;background:#e0e0e2"></div>
<div class="abs" style="left:544px;top:841px;width:16px;height:16px;background:#d0d0d3"></div>
<div class="abs" style="left:560px;top:841px;width:16px;height:16px;background:#dadadc"></div>
<div class="td" style="left:1001px;top:724.2px">Visa</div>
<div class="td" style="left:1332.4px;top:724.2px">03/2028</div>
<div class="td" style="left:1657.7px;top:724.2px">26/01/2025</div>
<div class="td" style="left:2071px;top:724.2px">Yes</div>
<div class="td" style="left:1001px;top:783px">Visa</div>
<div class="td" style="left:1332.4px;top:783px">04/2044</div>
<div class="td" style="left:1657.7px;top:783px">14/01/2025</div>
<div class="td" style="left:2071px;top:783px">No</div>
<div class="td" style="left:1001px;top:842px">Visa</div>
<div class="td" style="left:1332.4px;top:842px">04/2044</div>
<div class="td" style="left:1657.7px;top:842px">14/01/2025</div>
<div class="td" style="left:2071px;top:842px">No</div>
<svg class="abs" style="left:2452px;top:719px" width="20" height="23" viewBox="0 0 20 23"><rect x="0.3" y="2" width="18.8" height="2.5" rx="1.2" fill="#f06548"/><path d="M6,2.2 Q6.3,0 8.2,0 H11.4 Q13.3,0 13.6,2.2 Z" fill="#f06548"/><path d="M1.5,5.9 H18.1 V19.4 Q18.1,21.9 15.6,21.9 H4 Q1.5,21.9 1.5,19.4 Z" fill="#f06548"/><rect x="4.8" y="8.7" width="1.9" height="10.1" rx="0.9" fill="#fff"/><rect x="8.8" y="8.7" width="1.9" height="10.1" rx="0.9" fill="#fff"/><rect x="12.8" y="8.7" width="1.9" height="10.1" rx="0.9" fill="#fff"/></svg>
<svg class="abs" style="left:2452px;top:778px" width="20" height="23" viewBox="0 0 20 23"><rect x="0.3" y="2" width="18.8" height="2.5" rx="1.2" fill="#f06548"/><path d="M6,2.2 Q6.3,0 8.2,0 H11.4 Q13.3,0 13.6,2.2 Z" fill="#f06548"/><path d="M1.5,5.9 H18.1 V19.4 Q18.1,21.9 15.6,21.9 H4 Q1.5,21.9 1.5,19.4 Z" fill="#f06548"/><rect x="4.8" y="8.7" width="1.9" height="10.1" rx="0.9" fill="#fff"/><rect x="8.8" y="8.7" width="1.9" height="10.1" rx="0.9" fill="#fff"/><rect x="12.8" y="8.7" width="1.9" height="10.1" rx="0.9" fill="#fff"/></svg>
<svg class="abs" style="left:2452px;top:837px" width="20" height="23" viewBox="0 0 20 23"><rect x="0.3" y="2" width="18.8" height="2.5" rx="1.2" fill="#f06548"/><path d="M6,2.2 Q6.3,0 8.2,0 H11.4 Q13.3,0 13.6,2.2 Z" fill="#f06548"/><path d="M1.5,5.9 H18.1 V19.4 Q18.1,21.9 15.6,21.9 H4 Q1.5,21.9 1.5,19.4 Z" fill="#f06548"/><rect x="4.8" y="8.7" width="1.9" height="10.1" rx="0.9" fill="#fff"/><rect x="8.8" y="8.7" width="1.9" height="10.1" rx="0.9" fill="#fff"/><rect x="12.8" y="8.7" width="1.9" height="10.1" rx="0.9" fill="#fff"/></svg>
<div class="t" style="left:436.3px;top:894.5px;font-size:17.3px;color:#878a99">Showing <b>1 - 3</b> of <b>3</b> Results</div>
<div class="abs" style="left:2584.4px;top:891px;width:103px;height:43.5px;border:1px solid #e9ebec;border-radius:5px;background:#fff"></div>
<div class="t" style="left:2601.6px;top:904.5px;font-size:17.5px;color:#878a99">Previous</div>
<div class="abs" style="left:2694px;top:891px;width:44px;height:43.5px;border-radius:5px;background:#1f646c"></div>
<div class="t" style="left:2711.5px;top:904.5px;font-size:17.5px;color:#fff">1</div>
<div class="abs" style="left:2743.4px;top:891px;width:72px;height:43.5px;border:1px solid #e9ebec;border-radius:5px;background:#fff"></div>
<div class="t" style="left:2760.8px;top:904.5px;font-size:17.5px;color:#878a99">Next</div>

<!-- TRANSACTIONS -->
<div class="card" style="left:361px;top:1052px;width:2529px;height:600px"></div>
<div class="h4" style="left:415.2px;top:1076.2px">Transactions</div>
<div class="card" style="left:415px;top:1131px;width:582px;height:111px"></div>
<div class="card" style="left:1028px;top:1131px;width:582px;height:111px"></div>
<div class="card" style="left:1642px;top:1131px;width:582px;height:111px"></div>
<div class="card" style="left:2255px;top:1131px;width:582px;height:111px"></div>


<div class="t" style="left:436.4px;top:1154.3px;font-size:31.4px;color:#495057;-webkit-text-stroke:0.7px #495057">$</div>
<svg class="abs" style="left:455px;top:1156px" width="10" height="27" viewBox="0 0 10 27"><path d="M5.2,2.6 H8.8 V25.1 H5.2 V6.4 L2.1,7.8 L1.6,5 Z" fill="#495057"/></svg>
<div class="t" style="left:464.8px;top:1167px;font-size:17.5px;color:#878a99;transform-origin:0 0;transform:scaleX(1.087)">.76k</div>
<div class="t" style="left:1049.9px;top:1154.3px;font-size:31.4px;color:#495057;-webkit-text-stroke:0.7px #495057">$</div>
<svg class="abs" style="left:1068.5px;top:1156px" width="10" height="27" viewBox="0 0 10 27"><path d="M5.2,2.6 H8.8 V25.1 H5.2 V6.4 L2.1,7.8 L1.6,5 Z" fill="#495057"/></svg>
<div class="t" style="left:1078.1px;top:1167px;font-size:17.5px;color:#878a99;transform-origin:0 0;transform:scaleX(1.139)">.66k</div>
<div class="t" style="left:1663.7px;top:1154.3px;font-size:31.4px;color:#495057;-webkit-text-stroke:0.7px #495057">$</div>
<div class="t" style="left:1683.5px;top:1154.3px;font-size:31.4px;color:#495057;-webkit-text-stroke:0.7px #495057">0</div>
<div class="t" style="left:1700.8px;top:1167px;font-size:17.5px;color:#878a99;transform-origin:0 0;transform:scaleX(1.118)">.00</div>
<div class="t" style="left:2277px;top:1154.3px;font-size:31.4px;color:#495057;-webkit-text-stroke:0.7px #495057">$</div>
<div class="t" style="left:2297.4px;top:1154.3px;font-size:31.4px;color:#495057;-webkit-text-stroke:0.7px #495057">5</div>
<div class="t" style="left:2316px;top:1154.3px;font-size:31.4px;color:#495057;-webkit-text-stroke:0.7px #495057">0</div>
<div class="t" style="left:2333.3px;top:1167px;font-size:17.5px;color:#878a99;transform-origin:0 0;transform:scaleX(1.118)">.00</div>
<div class="t" style="left:436.6px;top:1201.8px;font-size:16.4px;color:#878a99;transform-origin:0 0;transform:scaleX(1.21);-webkit-text-stroke:0.35px #878a99">Total Transactions</div>
<div class="t" style="left:1050.3px;top:1201.8px;font-size:16.4px;color:#878a99;transform-origin:0 0;transform:scaleX(1.21);-webkit-text-stroke:0.35px #878a99">Total Uninvoiced Transactions</div>
<div class="t" style="left:1663.3px;top:1201.8px;font-size:16.4px;color:#878a99;transform-origin:0 0;transform:scaleX(1.21);-webkit-text-stroke:0.35px #878a99">Total Transactions This Month</div>
<div class="t" style="left:2276.8px;top:1201.8px;font-size:16.4px;color:#878a99;transform-origin:0 0;transform:scaleX(1.21);-webkit-text-stroke:0.35px #878a99">Total Transactions Last Month</div>
<div class="icard" style="left:414.5px;top:1274px;width:2423px;height:400px"></div>
<div class="abs" style="left:415px;top:1341.5px;width:2422px;height:1px;background:#e9ebec"></div>
<div class="h4" style="left:436.5px;top:1297.1px">All Transactions</div>
<div class="btn" style="left:436px;top:1402px;width:135px;height:49px"></div>
<svg class="abs" style="left:456px;top:1423px" width="16" height="16" viewBox="0 0 16 16"><path d="M8,1 V15 M1,8 H15" stroke="#fff" stroke-width="2.3"/></svg>
<div class="t" style="left:482px;top:1419px;font-size:17.3px;color:#fff">Add New</div>
<div class="inp" style="left:598px;top:1402px;width:2083.7px;height:49px"></div>
<svg class="abs" style="left:614px;top:1416px" width="22" height="22" viewBox="0 0 22 22"><circle cx="9" cy="9" r="6.4" fill="none" stroke="#80869a" stroke-width="2.4"/><path d="M13.8,13.8 L19.4,19.4" stroke="#80869a" stroke-width="2.6" stroke-linecap="round"/></svg>
<div class="t" style="left:652.8px;top:1419.3px;font-size:17.3px;color:#878a99">Search...</div>
<div class="btn" style="left:2704px;top:1402px;width:110.7px;height:44px"></div>
<svg class="abs" style="left:2722px;top:1408px" width="26" height="22" viewBox="0 0 26 22"><path d="M2.6,2.2 H22.4 Q23.6,2.3 22.9,3.4 L15.2,11.6 V19.4 Q15.1,20.4 14.1,19.8 L11.4,17.8 Q10.8,17.3 10.8,16.6 V11.6 L3.1,3.4 Q2.4,2.3 2.6,2.2 Z" fill="#fff"/></svg>
<div class="t" style="left:2757px;top:1411.6px;font-size:17.3px;color:#fff">Filter</div>
<div class="th" style="left:449.2px;top:1494.3px">TRANSACTION</div>
<div class="th" style="left:449.2px;top:1520.2px">ID</div>
<svg class="abs" style="left:471px;top:1527px" width="14" height="10" viewBox="0 0 14 10"><path d="M1.5,1.8 H12.5 L7,8.6 Z" fill="#212529" stroke="#212529" stroke-width="1" stroke-linejoin="round"/></svg>
<div class="th" style="left:598.3px;top:1520.2px">TITLE</div>
<div class="th" style="left:1354.5px;top:1494.3px">RETAIL</div>
<div class="th" style="left:1354.5px;top:1520.2px">COST</div>
<div class="th" style="left:1488px;top:1494.3px">WHOLESALE</div>
<div class="th" style="left:1488px;top:1520.2px">COST</div>
<div class="th" style="left:1622.8px;top:1520.2px">INVOICED?</div>
<div class="th" style="left:1963.2px;top:1520.2px">PURCHASE DATE</div>
<div class="th" style="left:2538px;top:1520.2px">ACTIONS</div>
<div class="abs" style="left:436px;top:1557px;width:2378.5px;height:1px;background:#e9ebec"></div>
<div class="abs" style="left:436px;top:1558px;width:2378.5px;height:40px;background:#f9f9f9"></div>
<div class="td" style="left:449.2px;top:1578.5px">1150</div>
<div class="td" style="left:598.3px;top:1578.5px">Payment for Logging IoT Data Pack (537)</div>
<div class="td" style="left:1354.5px;top:1578.5px">10</div>
<div class="td" style="left:1488px;top:1578.5px">1</div>
<div class="td" style="left:1622.8px;top:1578.5px">Yes</div>
<div class="td" style="left:1963.2px;top:1578.5px">11 Nov 2025 03:50 PM</div>
<svg class="abs" style="left:2540px;top:1573px" width="18" height="20" viewBox="0 0 18 20"><path d="M8.5,1.5 V14 M3.5,9.5 L8.5,14.5 L13.5,9.5 M1.5,18 H15.5" fill="none" stroke="#1f646c" stroke-width="2.2"/></svg>
<svg class="abs" style="left:2580px;top:1574px" width="20" height="23" viewBox="0 0 20 23"><rect x="0.3" y="2" width="18.8" height="2.5" rx="1.2" fill="#f06548"/><path d="M6,2.2 Q6.3,0 8.2,0 H11.4 Q13.3,0 13.6,2.2 Z" fill="#f06548"/><path d="M1.5,5.9 H18.1 V19.4 Q18.1,21.9 15.6,21.9 H4 Q1.5,21.9 1.5,19.4 Z" fill="#f06548"/><rect x="4.8" y="8.7" width="1.9" height="10.1" rx="0.9" fill="#fff"/><rect x="8.8" y="8.7" width="1.9" height="10.1" rx="0.9" fill="#fff"/><rect x="12.8" y="8.7" width="1.9" height="10.1" rx="0.9" fill="#fff"/></svg>

<div id="scr"><i></i></div>
</body>
</html>
